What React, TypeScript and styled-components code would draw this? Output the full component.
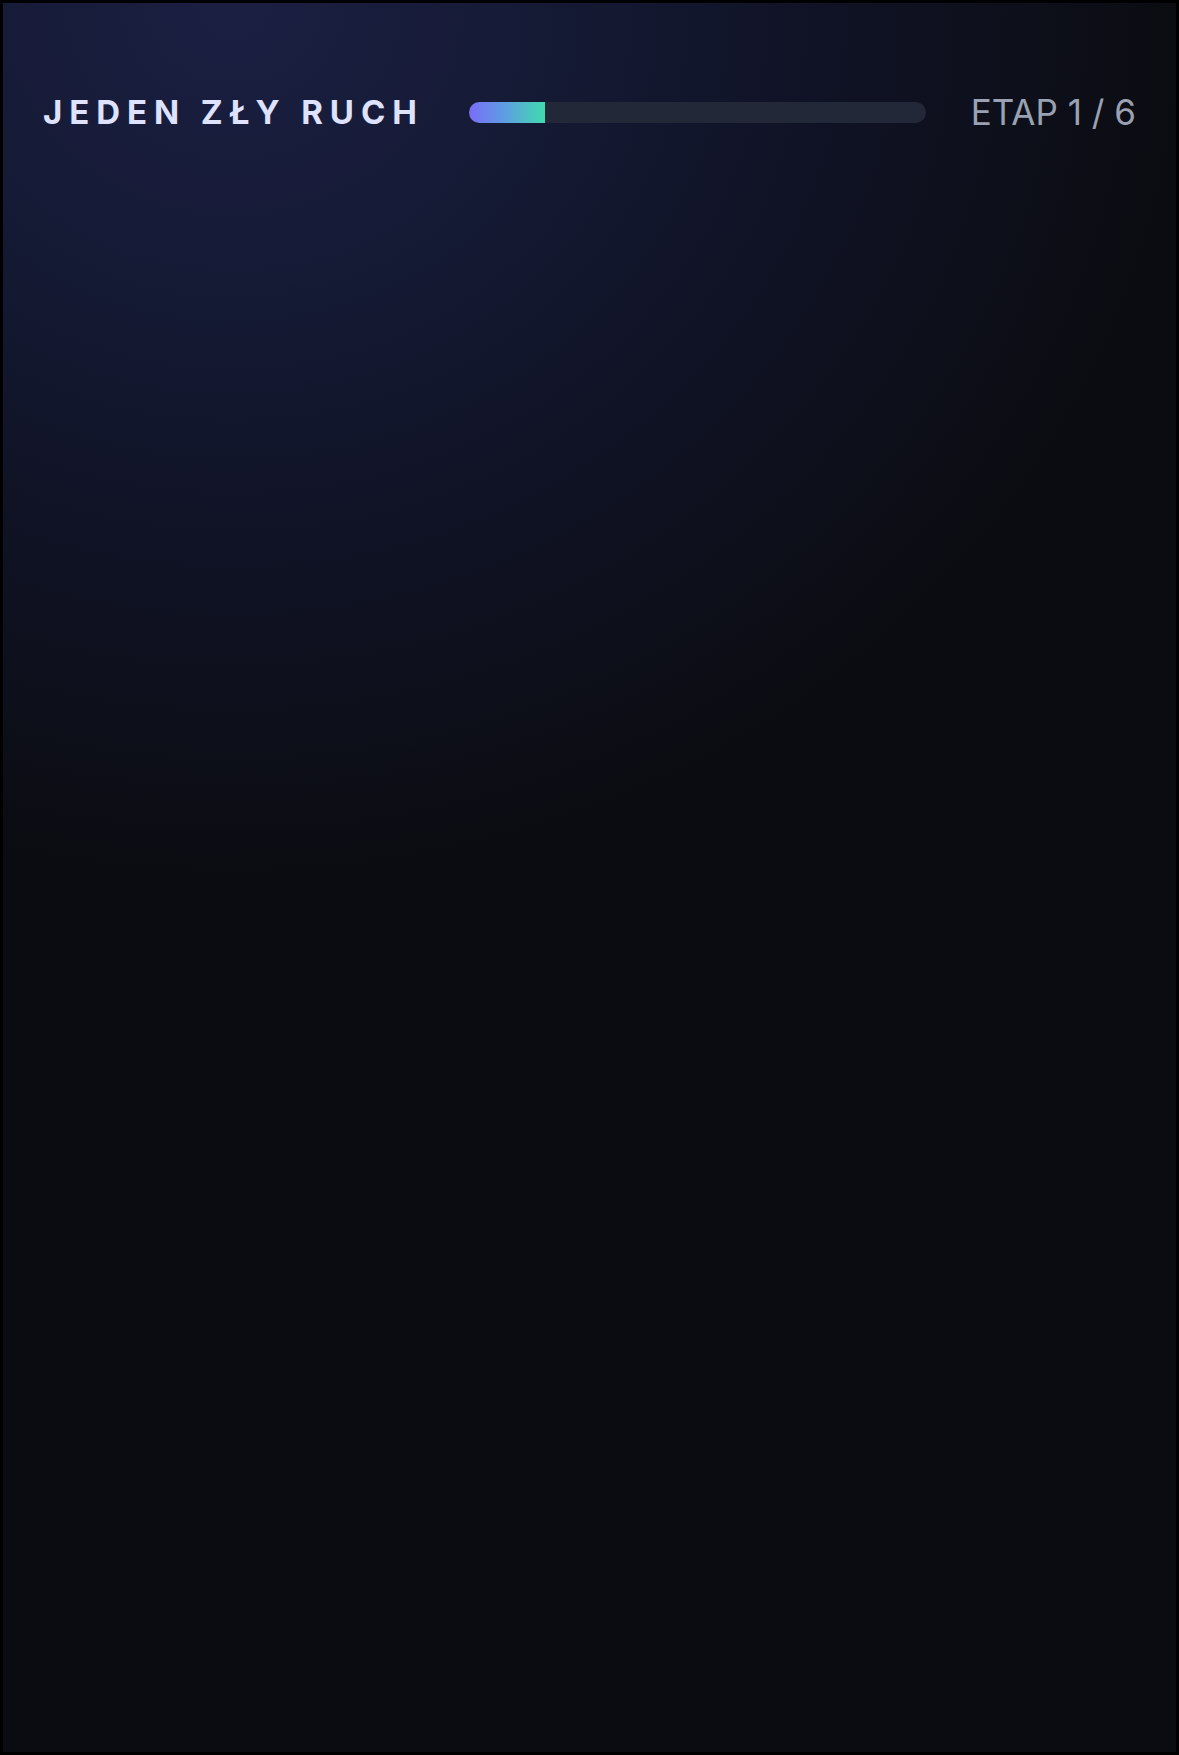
import React from "react";
import styled, { createGlobalStyle } from "styled-components";

const GlobalStyle = createGlobalStyle`
  html, body {
    margin: 0;
    padding: 0;
    background: #000;
  }
  body {
    font-family: Inter, "Noto Sans", "Liberation Sans", sans-serif;
  }
  #root {
    padding: 3px;
  }
  * { box-sizing: border-box; }
`;

const Screen = styled.main`
  min-height: 1749px;
  background:
    radial-gradient(ellipse 960px 880px at 230px 0px, #1b1f42 0%, #151a35 32%, #0f1223 65%, rgba(11, 12, 17, 0) 100%),
    #0b0c11;
  padding: 89px 40px 0 40px;
`;

const Header = styled.header`
  display: flex;
  align-items: center;
  gap: 45px;
  height: 40px;
`;

const Title = styled.h1`
  margin: 0;
  font-family: Inter, "Noto Sans", sans-serif;
  font-weight: 700;
  font-size: 33px;
  line-height: 1;
  letter-spacing: 0.21em;
  color: #dfe2ff;
  white-space: nowrap;
`;

const Track = styled.div`
  flex: 1;
  height: 21px;
  border-radius: 11px;
  background: #232838;
  overflow: hidden;
`;

const Fill = styled.div`
  height: 100%;
  background: linear-gradient(90deg, #7a6cf7 0%, #5f9ce3 45%, #40dbae 100%);
`;

const Stage = styled.span`
  font-family: Inter, "Noto Sans", sans-serif;
  font-weight: 400;
  font-size: 35px;
  line-height: 1;
  color: #9aa1b3;
  white-space: nowrap;
`;

export default function App() {
  const step = 1;
  const total = 6;
  return (
    <>
      <GlobalStyle />
      <Screen>
        <Header>
          <Title>JEDEN ZŁY RUCH</Title>
          <Track>
            <Fill style={{ width: `${(step / total) * 100}%` }} />
          </Track>
          <Stage>
            ETAP {step} / {total}
          </Stage>
        </Header>
      </Screen>
    </>
  );
}
